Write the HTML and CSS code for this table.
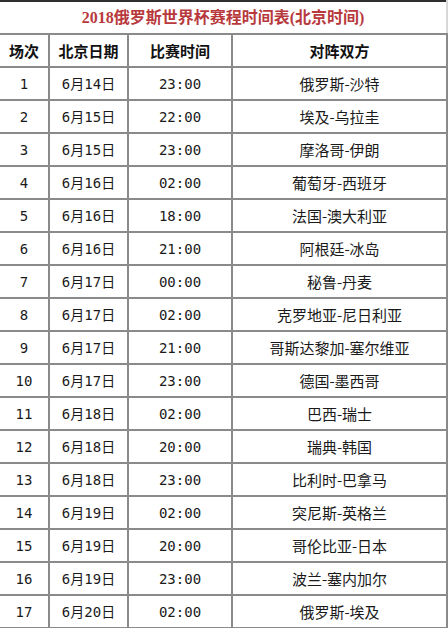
FILE: index.html
```html
<!DOCTYPE html>
<html lang="zh-CN">
<head>
<meta charset="utf-8">
<title>2018俄罗斯世界杯赛程时间表</title>
<link rel="stylesheet" href="styles.css">
</head>
<body>
<table class="schedule">
  <colgroup>
    <col class="c-no"><col class="c-date"><col class="c-time"><col class="c-match">
  </colgroup>
  <thead>
    <tr class="title-row"><th colspan="4" class="title">2018俄罗斯世界杯赛程时间表(北京时间)</th></tr>
    <tr class="head-row"><th>场次</th><th>北京日期</th><th>比赛时间</th><th>对阵双方</th></tr>
  </thead>
  <tbody>
    <tr><td>1</td><td>6月14日</td><td>23:00</td><td class="m">俄罗斯-沙特</td></tr>
    <tr><td>2</td><td>6月15日</td><td>22:00</td><td class="m">埃及-乌拉圭</td></tr>
    <tr><td>3</td><td>6月15日</td><td>23:00</td><td class="m">摩洛哥-伊朗</td></tr>
    <tr><td>4</td><td>6月16日</td><td>02:00</td><td class="m">葡萄牙-西班牙</td></tr>
    <tr><td>5</td><td>6月16日</td><td>18:00</td><td class="m">法国-澳大利亚</td></tr>
    <tr><td>6</td><td>6月16日</td><td>21:00</td><td class="m">阿根廷-冰岛</td></tr>
    <tr><td>7</td><td>6月17日</td><td>00:00</td><td class="m">秘鲁-丹麦</td></tr>
    <tr><td>8</td><td>6月17日</td><td>02:00</td><td class="m">克罗地亚-尼日利亚</td></tr>
    <tr><td>9</td><td>6月17日</td><td>21:00</td><td class="m">哥斯达黎加-塞尔维亚</td></tr>
    <tr><td>10</td><td>6月17日</td><td>23:00</td><td class="m">德国-墨西哥</td></tr>
    <tr><td>11</td><td>6月18日</td><td>02:00</td><td class="m">巴西-瑞士</td></tr>
    <tr><td>12</td><td>6月18日</td><td>20:00</td><td class="m">瑞典-韩国</td></tr>
    <tr><td>13</td><td>6月18日</td><td>23:00</td><td class="m">比利时-巴拿马</td></tr>
    <tr><td>14</td><td>6月19日</td><td>02:00</td><td class="m">突尼斯-英格兰</td></tr>
    <tr><td>15</td><td>6月19日</td><td>20:00</td><td class="m">哥伦比亚-日本</td></tr>
    <tr><td>16</td><td>6月19日</td><td>23:00</td><td class="m">波兰-塞内加尔</td></tr>
    <tr><td>17</td><td>6月20日</td><td>02:00</td><td class="m">俄罗斯-埃及</td></tr>
  </tbody>
</table>
</body>
</html>
```
FILE: styles.css
```css
html, body {
  margin: 0;
  padding: 0;
  background: #fff;
}
.schedule {
  width: 447px;
  table-layout: fixed;
  border-collapse: collapse;
  font-family: "DejaVu Sans Mono", "Noto Sans CJK SC", monospace;
  font-size: 14px;
  color: #1a1a1a;
}
.c-no { width: 49px; }
.c-date { width: 79px; }
.c-time { width: 104px; }
.c-match { width: 215px; }
.schedule th, .schedule td {
  height: 31px;
  padding: 0;
  text-align: center;
  vertical-align: middle;
  border: 2px solid #8a8a8a;
  line-height: 1;
}
.schedule tr > :first-child { border-left: none; }
.title-row .title {
  border-top: 2px solid #2e2e2e;
  border-left: none;
  border-right: 2px solid #d8d8d8;
  font-family: "Liberation Serif", "Noto Sans CJK SC", serif;
  font-weight: bold;
  font-size: 16px;
  color: #b8393d;
  letter-spacing: 0;
}
.head-row th {
  font-family: "Noto Sans CJK SC", sans-serif;
  font-weight: bold;
  font-size: 15px;
  color: #111;
}
.schedule td.m {
  font-family: "Noto Sans CJK SC", sans-serif;
  font-size: 15px;
}
```
